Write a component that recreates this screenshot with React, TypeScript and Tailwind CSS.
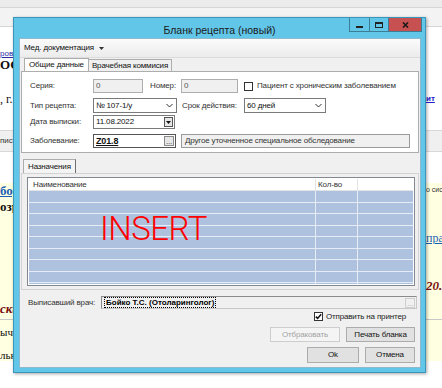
import React from "react";

const serif = "font-['Liberation_Serif',serif]";

function Chevron() {
  return (
    <svg width="7" height="5" viewBox="0 0 7 5" className="shrink-0">
      <path d="M0.5 1 L3.5 4 L6.5 1" fill="none" stroke="#333" strokeWidth="1" />
    </svg>
  );
}

function Select({ w, text }: { w: string; text: string }) {
  return (
    <div className={`${w} h-[15px] bg-white border border-[#7a7a7a] flex items-center justify-between pl-[2px] pr-[3px]`}>
      <span>{text}</span>
      <Chevron />
    </div>
  );
}

function Checkbox({ checked }: { checked?: boolean }) {
  return (
    <div className="w-[9px] h-[9px] bg-white border border-[#333] flex items-center justify-center shrink-0">
      {checked && (
        <svg width="7" height="7" viewBox="0 0 7 7">
          <path d="M0.8 3.6 L2.6 5.4 L6.2 1.2" fill="none" stroke="#111" strokeWidth="1.5" />
        </svg>
      )}
    </div>
  );
}

function Dots({ disabled }: { disabled?: boolean }) {
  return (
    <div
      className={`w-[10px] h-[10px] border flex items-end justify-center leading-[6px] text-[8px] ${
        disabled ? "border-[#cfcfcf] bg-[#f0f0f0] text-[#b0b0b0]" : "border-[#8a8a8a] bg-[#e6e6e6] text-[#333]"
      }`}
    >
      ...
    </div>
  );
}

function Btn({ w, h, text, disabled }: { w: string; h: string; text: string; disabled?: boolean }) {
  return (
    <div
      className={`${w} ${h} border flex items-center justify-center ${
        disabled ? "border-[#cdcdcd] bg-[#f4f4f4] text-[#a3a3a3]" : "border-[#acacac] bg-[#e1e1e1] text-[#111]"
      }`}
    >
      {text}
    </div>
  );
}

function Dialog() {
  const rows = Array.from({ length: 9 });
  return (
    <div className="absolute left-[13px] top-[17px] w-[413px] h-[356px] bg-[#62c6e9] border border-[#3a95ba] shadow-[1px_1px_3px_rgba(0,0,0,0.35)] flex flex-col">
      {/* title bar */}
      <div className="relative h-[20px] flex items-end justify-center pb-[1px]">
        <span className="text-[10.5px] tracking-normal text-[#1b1b1b] leading-none mb-[2px]">Бланк рецепта (новый)</span>
        <div className="absolute right-[3px] top-0 flex h-[14px] border border-[#3c7d96] border-t-0">
          <div className="w-[20px] flex items-center justify-center border-r border-[#3c7d96]">
            <div className="w-[7px] h-[2px] bg-[#222] mt-[5px]" />
          </div>
          <div className="w-[19px] flex items-center justify-center border-r border-[#3c7d96]">
            <div className="w-[8px] h-[6px] border border-[#222] border-t-2" />
          </div>
          <div className="w-[32px] bg-[#c75050] flex items-center justify-center">
            <svg width="7" height="6" viewBox="0 0 7 6">
              <path d="M1 0.5 L6 5.5 M6 0.5 L1 5.5" stroke="#1a1a1a" strokeWidth="1.6" />
            </svg>
          </div>
        </div>
      </div>

      {/* client */}
      <div className="ml-[5px] mr-[4px] h-[330px] bg-[#f0f0f0] border border-[#8fb9cc] flex flex-col px-[1px]">
        {/* menu */}
        <div className="-mx-[1px] h-[19px] bg-gradient-to-b from-[#fbfbfb] to-[#ececec] border-b border-[#dcdcdc] flex items-center pl-[4px] gap-[5px]">
          <span>Мед. документация</span>
          <svg width="5" height="3" viewBox="0 0 5 3">
            <path d="M0 0 H5 L2.5 3 Z" fill="#333" />
          </svg>
        </div>

        {/* tabs */}
        <div className="flex h-[13px] pl-[3px] items-end">
          <div className="h-[13px] px-[4px] bg-white border border-b-0 border-[#adadad] flex items-center">Общие данные</div>
          <div className="h-[12px] px-[3px] bg-[#f0f0f0] border border-l-0 border-b-0 border-[#adadad] flex items-center">
            Врачебная коммисия
          </div>
        </div>

        {/* main panel */}
        <div className="h-[82px] bg-white border border-[#adadad] pl-[8px] pt-[7px] flex flex-col">
          <div className="flex items-center h-[14px]">
            <span className="w-[63px] text-[#333]">Серия:</span>
            <div className="w-[50px] h-[14px] bg-[#f0f0f0] border border-[#adadad] pl-[2px] flex items-center text-[#555]">0</div>
            <span className="w-[38px] pl-[7px] text-[#333]">Номер:</span>
            <div className="w-[57px] h-[14px] bg-[#f0f0f0] border border-[#adadad] pl-[2px] flex items-center text-[#555]">0</div>
            <div className="ml-[6px] mr-[4px]">
              <Checkbox />
            </div>
            <span className="text-[#333]">Пациент с хроническим заболеванием</span>
          </div>
          <div className="flex items-center h-[15px] mt-[5px]">
            <span className="w-[63px] text-[#333]">Тип рецепта:</span>
            <Select w="w-[84px]" text="№ 107-1/у" />
            <span className="w-[67px] pl-[5px] text-[#333]">Срок действия:</span>
            <Select w="w-[82px]" text="60 дней" />
          </div>
          <div className="flex items-center h-[14px] mt-[2px]">
            <span className="w-[63px] text-[#333]">Дата выписки:</span>
            <div className="w-[82px] h-[14px] bg-white border border-[#7a7a7a] pl-[2px] pr-[1px] flex items-center justify-between">
              <span>11.08.2022</span>
              <div className="w-[9px] h-[10px] bg-[#e6e6e6] border border-[#555] flex items-center justify-center">
                <svg width="5" height="3" viewBox="0 0 5 3">
                  <path d="M0 0 H5 L2.5 3 Z" fill="#111" />
                </svg>
              </div>
            </div>
          </div>
          <div className="flex items-center h-[14px] mt-[5px]">
            <span className="w-[63px] text-[#333]">Заболевание:</span>
            <div className="w-[83px] h-[14px] bg-white border border-[#555] pl-[2px] pr-[1px] flex items-center justify-between">
              <span className="font-bold underline text-[9px]">Z01.8</span>
              <Dots />
            </div>
            <div className="ml-[5px] w-[229px] h-[14px] bg-[#f0f0f0] border border-[#9a9a9a] pl-[3px] flex items-center text-[#333]">
              Другое уточненное специальное обследование
            </div>
          </div>
        </div>

        {/* prescriptions tab */}
        <div className="flex h-[14px] pl-[2px] mt-[6px] items-end">
          <div className="h-[14px] px-[4px] bg-[#f4f4f4] border border-b-0 border-[#adadad] border-r-[#707070] flex items-center">Назначения</div>
        </div>
        <div className="h-[117px] border border-[#d3d3d3] pl-[5px] pr-[3px] pt-[3px]">
          <div className="h-[109px] border border-[#828790] bg-white p-[1px] flex flex-col">
            <div className="h-[12px] flex border-b border-[#e3e3e3] text-[#333] shrink-0">
              <div className="w-[287px] pl-[4px] flex items-center border-r border-[#e3e3e3]">Наименование</div>
              <div className="w-[42px] pl-[2px] flex items-center border-r border-[#e3e3e3]">Кол-во</div>
              <div className="flex-1" />
            </div>
            <div className="relative flex-1 overflow-hidden bg-[#aec1de]">
              {rows.map((_, i) => (
                <div key={i} className="h-[11.5px] flex border-b border-[#e6ecf5]">
                  <div className="w-[287px] border-r border-[#e6ecf5]" />
                  <div className="w-[42px] border-r border-[#e6ecf5]" />
                </div>
              ))}
              <span className="absolute left-[71px] top-[21px] text-[#ff0000] text-[33px] leading-none font-['Roboto',sans-serif] font-light tracking-[-0.5px]">
                INSERT
              </span>
            </div>
          </div>
        </div>

        {/* doctor */}
        <div className="flex items-center h-[13px] mt-[6px] pl-[7px]">
          <span className="w-[73px] text-[#333]">Выписавший врач:</span>
          <div className="flex-1 mr-[2px] h-[13px] bg-[#f0f0f0] border border-[#c8c8c8] border-t-[#8a8a8a] border-l-[#8a8a8a] flex items-center justify-between pl-[2px] pr-[1px]">
            <span className="font-bold text-black border border-dotted border-black leading-[9px] px-[1px] tracking-normal">
              Бойко Т.С. (Отоларинголог)
            </span>
            <Dots disabled />
          </div>
        </div>

        <div className="flex items-center justify-end h-[9px] mt-[3px] pr-[13px] gap-[3px]">
          <Checkbox checked />
          <span className="text-[#222]">Отправить на принтер</span>
        </div>

        <div className="flex justify-end gap-[6px] mt-[6px] pr-[4px]">
          <Btn w="w-[70px]" h="h-[15px]" text="Отбраковать" disabled />
          <Btn w="w-[69px]" h="h-[15px]" text="Печать бланка" />
        </div>
        <div className="flex justify-end gap-[6px] mt-[5px] pr-[4px]">
          <Btn w="w-[52px]" h="h-[16px]" text="Ok" />
          <Btn w="w-[50px]" h="h-[16px]" text="Отмена" />
        </div>
      </div>
    </div>
  );
}

function Side({ h, left, right, className = "" }: { h: string; left?: React.ReactNode; right?: React.ReactNode; className?: string }) {
  return (
    <div className={`${h} flex justify-between items-center ${className}`}>
      <div className="whitespace-nowrap overflow-hidden w-[60px]">{left}</div>
      <div className="whitespace-nowrap overflow-hidden w-[16px]">{right}</div>
    </div>
  );
}

export default function App() {
  return (
    <div className="relative w-[442px] h-[388px] overflow-hidden bg-white font-['Liberation_Sans',sans-serif] text-[8px] tracking-[-0.15px] text-[#111] leading-none">
      {/* background page */}
      <div className="flex flex-col tracking-normal">
        <div className="h-[8px] bg-[#ececec] border-b border-[#d6d6d6]" />
        <div className="h-[19px] bg-[#f3f3f3] border-b border-[#d6d6d6]" />
        <div className="h-[103px] bg-white flex flex-col">
          <div className="h-[22px]" />
          <Side h="h-[9px]" left={<span className="text-[8px] text-[#2a2aa8] underline">ровно</span>} />
          <Side h="h-[12px]" left={<span className={`${serif} font-bold text-[13px]`}>ОС</span>} />
          <div className="h-[22px]" />
          <Side
            h="h-[14px]"
            left={<span className={`${serif} text-[12px]`}>, г.І</span>}
            right={<span className="text-[8px] font-bold text-[#2222cc] underline">ит</span>}
          />
        </div>
        <Side
          h="h-[22px]"
          className="bg-[#f0f0f0] border-y border-[#d8d8d8]"
          left={<span className="text-[8px] text-[#333]">пис</span>}
        />
        <div className="h-[31px] bg-white" />
        <div className="flex-1 bg-[#ffffe1] flex flex-col h-[205px]">
          <Side
            h="h-[14px]"
            left={<span className={`${serif} font-bold text-[13px] text-[#1b5fb5] underline`}>бор</span>}
            right={<span className="text-[7px] text-[#333]">о сис</span>}
          />
          <Side h="h-[18px]" left={<span className={`${serif} font-bold text-[13px]`}>озр</span>} />
          <Side h="h-[16px]" />
          <Side h="h-[14px]" right={<span className={`${serif} text-[12px] text-[#1b5fb5] underline`}>пра</span>} />
          <Side h="h-[33px]" />
          <Side
            h="h-[14px]"
            right={<span className={`${serif} font-bold italic text-[13px] text-[#7a0f0f]`}>20.</span>}
          />
          <Side h="h-[10px]" />
          <Side
            h="h-[12px]"
            left={<span className={`${serif} font-bold italic text-[13px] text-[#7a0f0f]`}>ски</span>}
          />
          <div className="h-[6px] border-b border-[#c8c8c8]" />
          <Side h="h-[14px]" className="mt-[5px]" left={<span className={`${serif} text-[11px]`}>ыче</span>} />
          <Side h="h-[12px]" className="mt-[10px]" left={<span className={`${serif} text-[11px]`}>льн</span>} />
        </div>
      </div>

      <Dialog />
    </div>
  );
}
